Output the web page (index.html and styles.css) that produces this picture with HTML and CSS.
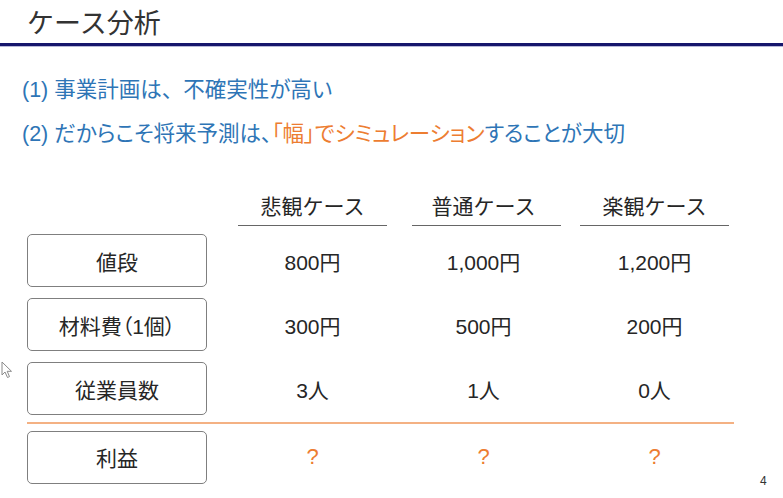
FILE: index.html
```html
<!DOCTYPE html>
<html lang="ja">
<head>
<meta charset="utf-8">
<link rel="stylesheet" href="styles.css">
</head>
<body>
<div class="slide">
  <header class="slide-head"><h1 class="title">ケース分析</h1></header>
  <ul class="points">
    <li>(1) 事業計画は<span class="full">、</span>不確実性が高い</li>
    <li>(2) だからこそ将来予測は、<span class="accent">「幅」でシミュレーション</span>することが大切</li>
  </ul>
  <div class="table">
    <div class="row head">
      <div></div>
      <div class="col-head">悲観ケース</div>
      <div class="col-head">普通ケース</div>
      <div class="col-head">楽観ケース</div>
    </div>
    <div class="row body first">
      <div class="label">値段</div>
      <div class="val">800円</div>
      <div class="val">1,000円</div>
      <div class="val">1,200円</div>
    </div>
    <div class="row body">
      <div class="label">材料費（1個）</div>
      <div class="val">300円</div>
      <div class="val">500円</div>
      <div class="val">200円</div>
    </div>
    <div class="row body">
      <div class="label">従業員数</div>
      <div class="val">3人</div>
      <div class="val">1人</div>
      <div class="val">0人</div>
    </div>
    <div class="divider"></div>
    <div class="row body">
      <div class="label">利益</div>
      <div class="val q">?</div>
      <div class="val q">?</div>
      <div class="val q">?</div>
    </div>
  </div>
  <svg class="cursor" width="12" height="18" viewBox="0 0 12 18"><path d="M1 1 L1 14 L4 11 L6.5 16.5 L8.5 15.6 L6.2 10.3 L10.5 10.3 Z" fill="#fff" stroke="#8a8a8a" stroke-width="1" stroke-linejoin="round"/></svg>
  <div class="page-no">4</div>
</div>
</body>
</html>
```

FILE: styles.css
```css
html, body {
  margin: 0;
  padding: 0;
  background: #fff;
}
.slide {
  position: relative;
  width: 783px;
  height: 498px;
  overflow: hidden;
  font-family: "Liberation Sans", "Noto Sans CJK JP", sans-serif;
  color: #262626;
}
.slide-head {
  height: 43px;
  border-bottom: 3px solid #16166c;
  box-shadow: 0 1px 0 #b8b8d8;
}
.title {
  margin: 0;
  padding-left: 27px;
  font-family: "Noto Sans CJK JP", sans-serif;
  font-weight: 400;
  font-size: 27px;
  line-height: 43px;
  color: #333;
}
.points {
  list-style: none;
  margin: 22px 0 0;
  padding: 0 0 0 22px;
  color: #2e75b6;
  font-size: 21.5px;
  line-height: 44px;
  font-feature-settings: "palt";
}
.points .full {
  font-feature-settings: normal;
}
.points .accent {
  color: #ed7d31;
}
.table {
  margin: 36px 0 0 27px;
  width: 707px;
  display: flex;
  flex-direction: column;
}
.row {
  display: grid;
  grid-template-columns: 211px 174px 168px 154px;
  align-items: center;
}
.col-head {
  width: 149px;
  text-align: center;
  font-size: 21px;
  line-height: 30px;
  padding-bottom: 3px;
  border-bottom: 1px solid #666;
  color: #262626;
}
.col-head:nth-child(3) {
  padding-right: 6px;
  width: 143px;
}
.row.body {
  height: 53px;
  margin-top: 11px;
}
.row.body.first {
  margin-top: 8px;
}
.label {
  box-sizing: border-box;
  width: 180px;
  height: 53px;
  border: 1.5px solid #7f7f7f;
  border-radius: 5px;
  display: flex;
  align-items: center;
  justify-content: center;
  font-size: 21px;
  font-feature-settings: "palt";
}
.val {
  width: 149px;
  text-align: center;
  font-size: 21px;
}
.val:nth-child(3) {
  width: 143px;
}
.val.q {
  color: #ed7d31;
  font-size: 22px;
}
.divider {
  margin-top: 7px;
  height: 1.5px;
  background: #f4b183;
  margin-bottom: -4px;
}
.cursor {
  position: absolute;
  left: 1px;
  top: 361px;
}
.page-no {
  position: absolute;
  left: 760px;
  top: 474px;
  font-size: 12px;
  color: #333;
}
```
